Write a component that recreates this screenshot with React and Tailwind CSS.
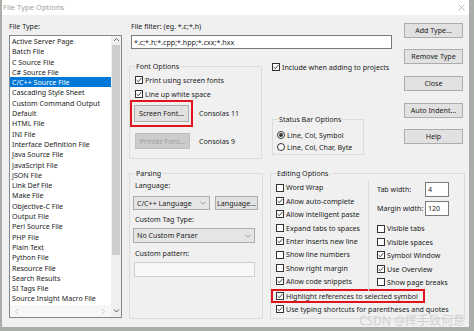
import React from "react";

// File Type Options dialog (Source Insight), scaled down Win10 look.
const FILE_TYPES = [
  "Active Server Page",
  "Batch File",
  "C Source File",
  "C# Source File",
  "C/C++ Source File",
  "Cascading Style Sheet",
  "Custom Command Output",
  "Default",
  "HTML File",
  "INI File",
  "Interface Definition File",
  "Java Source File",
  "JavaScript File",
  "JSON File",
  "Link Def File",
  "Make File",
  "Objective-C File",
  "Output File",
  "Perl Source File",
  "PHP File",
  "Plain Text",
  "Python File",
  "Resource File",
  "Search Results",
  "SI Tags File",
  "Source Insight Macro File",
];

const EDIT_LEFT = [
  ["Word Wrap", false],
  ["Allow auto-complete", true],
  ["Allow intelligent paste", true],
  ["Expand tabs to spaces", false],
  ["Enter inserts new line", true],
  ["Show line numbers", false],
  ["Show right margin", false],
  ["Allow code snippets", true],
];

const EDIT_RIGHT = [
  ["Visible tabs", false],
  ["Visible spaces", false],
  ["Symbol Window", true],
  ["Use Overview", true],
  ["Show page breaks", false],
];

function Box({ checked }) {
  return (
    <span className="w-[8px] h-[8px] border border-[#333] bg-white shrink-0 flex items-center justify-center">
      {checked && (
        <svg width="6" height="6" viewBox="0 0 6 6">
          <path d="M0.6 3.1 L2.3 4.7 L5.4 1" stroke="#333" strokeWidth="0.9" fill="none" />
        </svg>
      )}
    </span>
  );
}

function CheckRow({ label, checked, className = "" }) {
  return (
    <div className={"flex items-center whitespace-nowrap " + className}>
      <Box checked={checked} />
      <span className="ml-[2px]">{label}</span>
    </div>
  );
}

function Radio({ label, on }) {
  return (
    <div className="flex items-center h-[12px] whitespace-nowrap">
      <span className="w-[8px] h-[8px] rounded-full border border-[#333] bg-white flex items-center justify-center shrink-0">
        {on && <span className="w-[4px] h-[4px] rounded-full bg-[#333]" />}
      </span>
      <span className="ml-[2px]">{label}</span>
    </div>
  );
}

function Group({ label, className = "", children }) {
  return (
    <div className={"relative border border-[#dcdcdc] " + className}>
      <span className="absolute -top-[6px] left-[5px] bg-[#f0f0f0] px-[1px] leading-[11px] whitespace-nowrap">
        {label}
      </span>
      {children}
    </div>
  );
}

function Btn({ children, className = "", disabled }) {
  return (
    <div
      className={
        "flex items-center justify-center border whitespace-nowrap " +
        (disabled
          ? "bg-[#cccccc] border-[#bfbfbf] text-[#9d9d9d] "
          : "bg-[#e1e1e1] border-[#adadad] ") +
        className
      }
    >
      {children}
    </div>
  );
}

function Combo({ value, className = "" }) {
  return (
    <div
      className={
        "flex items-center justify-between bg-[#e5e5e5] border border-[#acacac] pl-[3px] pr-[3px] " +
        className
      }
    >
      <span className="whitespace-nowrap">{value}</span>
      <svg width="6" height="4" viewBox="0 0 6 4">
        <path d="M0.5 0.8 L3 3.2 L5.5 0.8" stroke="#888" strokeWidth="0.8" fill="none" />
      </svg>
    </div>
  );
}

function Arrow({ dir, color = "#606060" }) {
  const d = {
    up: "M1 4 L3.5 1.5 L6 4",
    down: "M1 1.5 L3.5 4 L6 1.5",
    left: "M4 1 L1.5 3.5 L4 6",
    right: "M2 1 L4.5 3.5 L2 6",
  }[dir];
  return (
    <svg width="7" height="7" viewBox="0 0 7 7">
      <path d={d} stroke={color} strokeWidth="0.9" fill="none" />
    </svg>
  );
}

export default function App() {
  return (
    <div className="w-[474px] h-[331px] bg-[#a9afa8] overflow-hidden relative font-['Noto_Sans',sans-serif] text-[7.1px] text-[#1c1c1c]">
      <div className="ml-[2px] w-[467px] h-[327px] bg-[#f0f0f0] flex flex-col">
        {/* title bar */}
        <div className="h-[15px] bg-white flex items-center justify-between pl-[1px] pr-[4px] shrink-0">
          <span className="text-[7.6px] text-[#a3a3a3]">File Type Options</span>
          <svg width="7" height="7" viewBox="0 0 7 7">
            <path d="M0.5 0.5 L6.5 6.5 M6.5 0.5 L0.5 6.5" stroke="#a0a0a0" strokeWidth="0.7" />
          </svg>
        </div>

        <div className="flex flex-1">
          {/* file type list */}
          <div className="ml-[7px] w-[113px] flex flex-col">
            <div className="pt-[6px] h-[16px] leading-[10px]">File Type:</div>
            <div className="mt-[4px] h-[283px] border border-[#828790] bg-white flex">
              <div className="flex-1 flex flex-col min-w-0">
                <div className="flex-1 overflow-hidden">
                  {FILE_TYPES.map((t) => (
                    <div
                      key={t}
                      className={
                        "h-[10.3px] leading-[10.3px] pl-[2px] whitespace-nowrap " +
                        (t === "C/C++ Source File" ? "bg-[#0078d7] text-white" : "")
                      }
                    >
                      {t}
                    </div>
                  ))}
                </div>
                <div className="h-[12px] flex items-center justify-between px-[4px] bg-[#f7f7f7]">
                  <Arrow dir="left" color="#c4c4c4" />
                  <Arrow dir="right" color="#c4c4c4" />
                </div>
              </div>
              <div className="w-[10px] bg-[#f0f0f0] flex flex-col items-center">
                <div className="h-[9px] flex items-center">
                  <Arrow dir="up" />
                </div>
                <div className="w-[8px] h-[210px] bg-[#cdcdcd]" />
                <div className="flex-1" />
                <div className="h-[12px] flex items-center">
                  <Arrow dir="down" color="#404040" />
                </div>
              </div>
            </div>
          </div>

          {/* right side */}
          <div className="ml-[7px] w-[336px] flex flex-col">
            <div className="h-[144px] flex">
              <div className="w-[263px] flex flex-col">
                <div className="pt-[6px] h-[16px] leading-[10px] pl-[2px]">File filter: (eg. *.c;*.h)</div>
                <div className="mt-[4px] ml-[2px] w-[261px] h-[14px] bg-white border border-[#7a7a7a] pl-[2px] leading-[12px]">
                  *.c;*.h;*.cpp;*.hpp;*.cxx;*.hxx
                </div>
                <div className="mt-[17px] flex items-start">
                  <Group label="Font Options" className="w-[133px] h-[93px]">
                    <CheckRow label="Print using screen fonts" checked className="mt-[7px] ml-[5px] h-[12px]" />
                    <CheckRow label="Line up white space" checked className="mt-[2px] ml-[5px] h-[12px]" />
                    <div className="flex items-center">
                      <div className="w-[63px] h-[27px] border-2 border-[#e0141c] flex items-center justify-center">
                        <Btn className="w-[55px] h-[17px]">Screen Font...</Btn>
                      </div>
                      <span className="ml-[6px]">Consolas 11</span>
                    </div>
                    <div className="mt-[6px] flex items-center">
                      <Btn disabled className="ml-[5px] w-[55px] h-[16px]">Printer Font...</Btn>
                      <span className="ml-[9px]">Consolas 9</span>
                    </div>
                  </Group>
                  <div className="ml-[10px] flex flex-col">
                    <CheckRow label="Include when adding to projects" checked className="-mt-[5px] h-[12px]" />
                    <Group label="Status Bar Options" className="mt-[46px] w-[92px] h-[36px]">
                      <div className="mt-[9px] ml-[4px]">
                        <Radio label="Line, Col, Symbol" on />
                        <Radio label="Line, Col, Char, Byte" />
                      </div>
                    </Group>
                  </div>
                </div>
              </div>
              <div className="ml-[12px] w-[59px] flex flex-col">
                <Btn className="mt-[8px] h-[15px]">Add Type...</Btn>
                <Btn className="mt-[11px] h-[15px]">Remove Type</Btn>
                <Btn className="mt-[12px] h-[15px]">Close</Btn>
                <Btn className="mt-[12px] h-[15px]">Auto Indent...</Btn>
                <Btn className="mt-[11px] h-[15px]">Help</Btn>
              </div>
            </div>

            <div className="mt-[14px] flex">
              <Group label="Parsing" className="w-[134px] h-[146px]">
                <div className="mt-[6px] ml-[5px] h-[10px] leading-[10px]">Language:</div>
                <div className="mt-[6px] flex">
                  <Combo value="C/C++ Language" className="ml-[3px] w-[77px] h-[14px]" />
                  <Btn className="ml-[5px] w-[43px] h-[14px]">Language...</Btn>
                </div>
                <div className="mt-[4px] ml-[5px] h-[10px] leading-[10px]">Custom Tag Type:</div>
                <Combo value="No Custom Parser" className="mt-[4px] ml-[3px] w-[122px] h-[15px]" />
                <div className="mt-[5px] ml-[5px] h-[10px] leading-[10px]">Custom pattern:</div>
                <div className="mt-[4px] ml-[4px] w-[121px] h-[15px] bg-[#f8f8f8] border border-[#cfcfcf]" />
              </Group>

              <Group label="Editing Options" className="ml-[7px] w-[195px] h-[146px]">
                <div className="mt-[7px] flex items-start">
                  <div className="w-[97px] flex flex-col">
                    {EDIT_LEFT.map(([l, c]) => (
                      <CheckRow key={l} label={l} checked={c} className="h-[13.4px] pl-[5px]" />
                    ))}
                  </div>
                  <div className="h-[110px] border-l border-[#dcdcdc] pl-[8px] flex flex-col">
                    <div className="mt-[1px] h-[15px] flex items-center">
                      <span className="w-[48px] whitespace-nowrap">Tab width:</span>
                      <div className="w-[24px] h-[15px] bg-white border border-[#7a7a7a] pl-[2px] leading-[13px]">4</div>
                    </div>
                    <div className="mt-[4px] h-[15px] flex items-center">
                      <span className="w-[48px] whitespace-nowrap">Margin width:</span>
                      <div className="w-[24px] h-[15px] bg-white border border-[#7a7a7a] pl-[2px] leading-[13px]">120</div>
                    </div>
                    <div className="mt-[6px]">
                      {EDIT_RIGHT.map(([l, c]) => (
                        <CheckRow key={l} label={l} checked={c} className="h-[13.4px]" />
                      ))}
                    </div>
                  </div>
                </div>
                <div className="-mt-[2px] w-[154px] h-[14px] border-2 border-[#e0141c] pl-[3px] flex items-center">
                  <CheckRow label="Highlight references to selected symbol" checked />
                </div>
                <CheckRow label="Use typing shortcuts for parentheses and quotes" checked className="h-[12.4px] pl-[5px]" />
              </Group>
            </div>
          </div>
        </div>
      </div>
      <div className="absolute right-[9px] top-[315px] text-[12px] leading-[12px] text-[#d0d0d0] font-['Noto_Sans','Noto_Sans_CJK_SC',sans-serif] whitespace-nowrap">
        CSDN @挥手致何意
      </div>
    </div>
  );
}
